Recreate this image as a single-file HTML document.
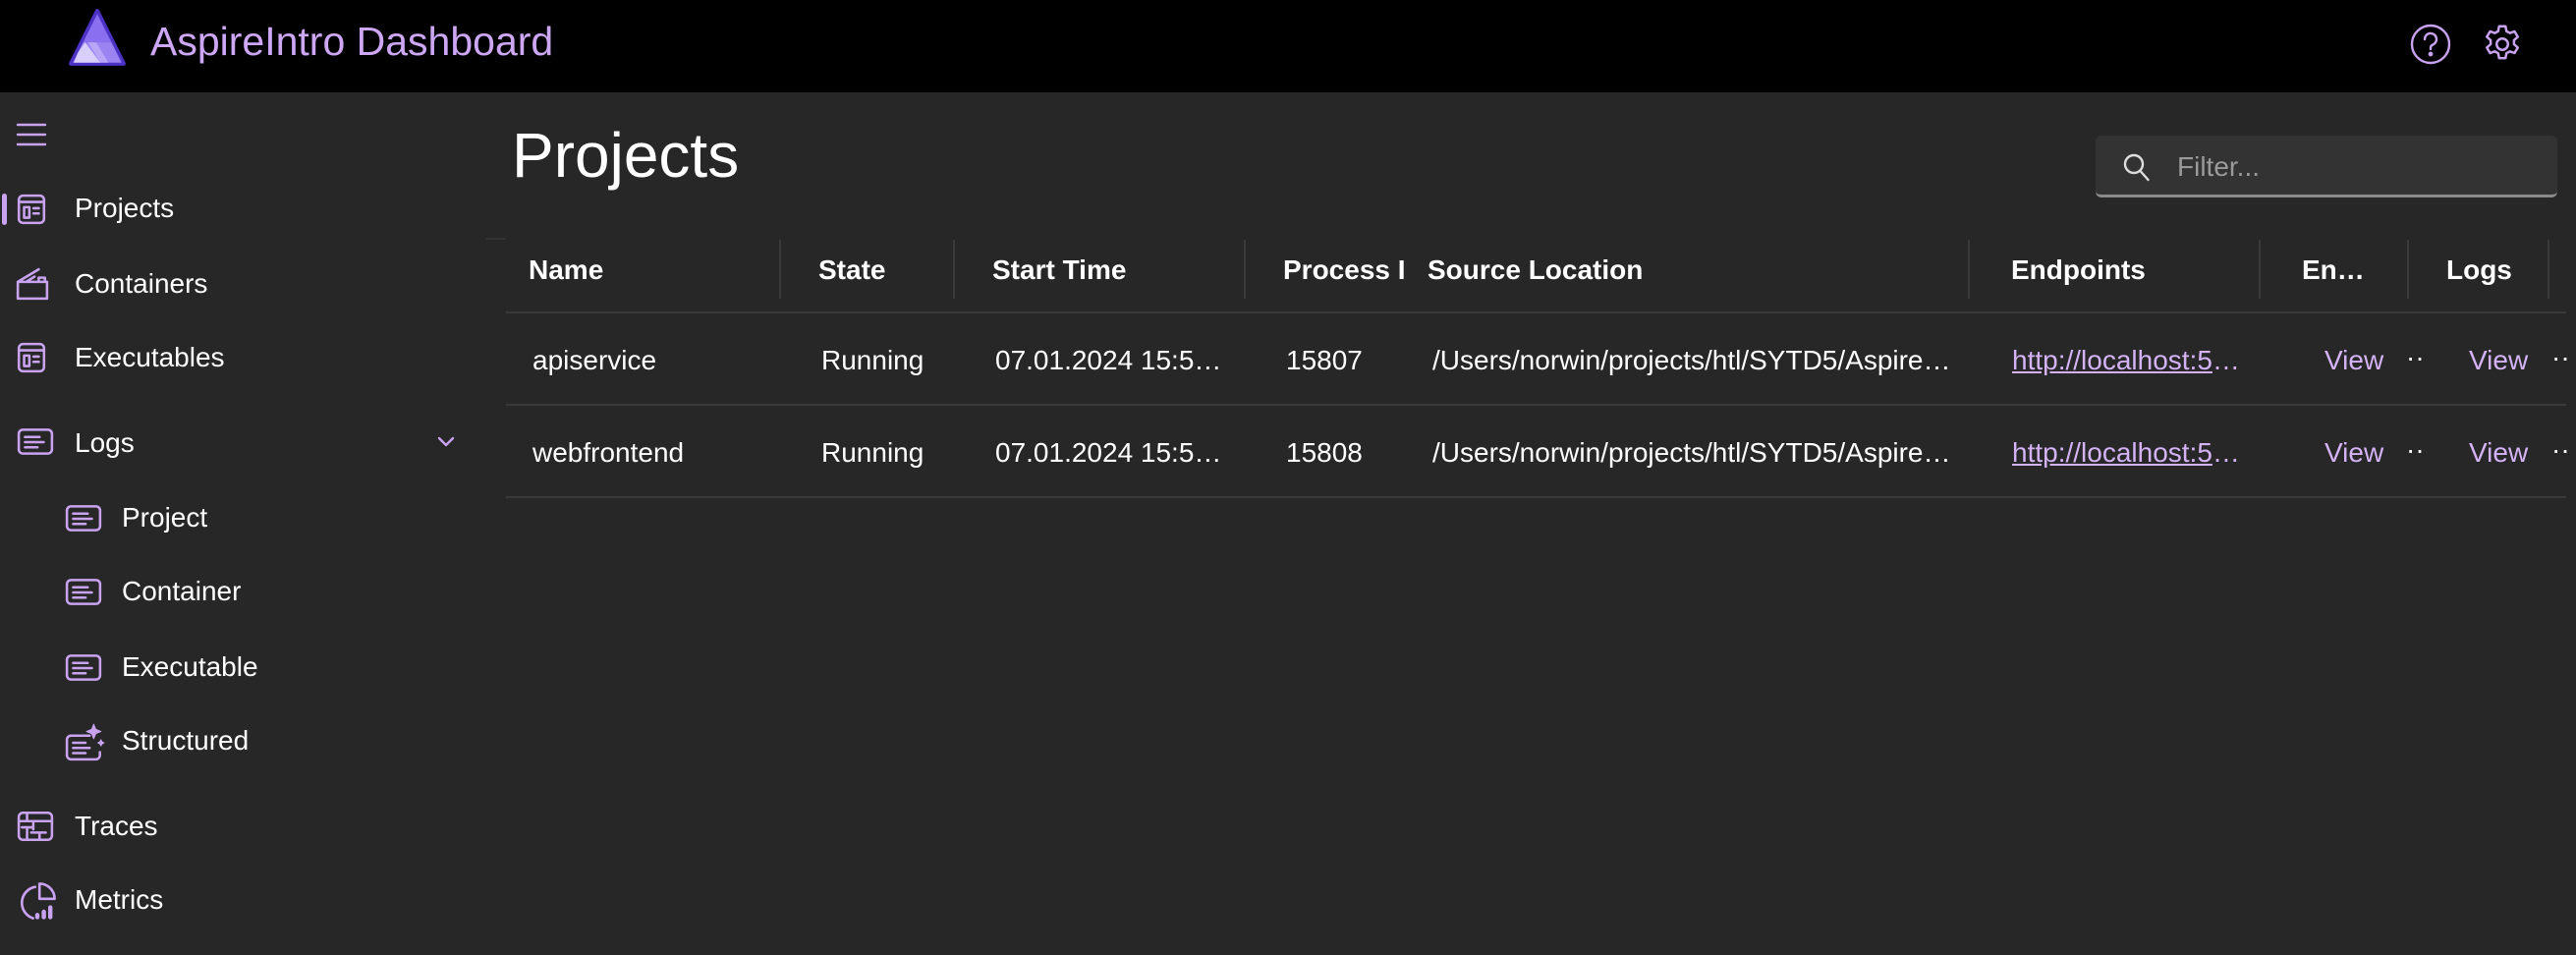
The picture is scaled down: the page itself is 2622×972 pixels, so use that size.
<!DOCTYPE html>
<html><head><meta charset="utf-8"><style>
*{margin:0;padding:0;box-sizing:border-box}
body{width:2622px;height:972px;background:#272727;font-family:"Liberation Sans",Arial,sans-serif;color:#fff;position:relative;overflow:hidden}
.a{position:absolute;white-space:nowrap}
.hdr{position:absolute;left:0;top:0;width:2622px;height:94px;background:#000}
.nav{font-size:28px;line-height:28px}
.th{font-size:28px;font-weight:bold;line-height:28px}
.td{font-size:28px;line-height:28px}
.p{color:#d3b3f5}
.vl{position:absolute;width:2px;background:#3a3a3a;height:60px;top:244px}
.hl{position:absolute;left:515px;width:2097px;height:2px;background:#3a3a3a}
svg.i{position:absolute;fill:none;stroke:#c9a3f0;stroke-width:2.4;stroke-linecap:round;stroke-linejoin:round}
</style></head><body>
<div class="hdr"></div>
<svg class="a" style="left:64px;top:8px" width="70" height="62" viewBox="0 0 58 60">
<path d="M29 3 L55 55 L3 55 Z" fill="#6c4fe0" stroke="#4c33c6" stroke-width="4" stroke-linejoin="round"/>
<path d="M29 6 L43 34 L15 34Z" fill="#8a6ff0"/>
<path d="M15 34 L43 34 L53 54 L5 54Z" fill="#9b84f2"/>
<path d="M10 44 L17 34 L32 54 L6 54Z" fill="#d9cffb"/>
<path d="M20 34 L28 34 L40 54 L32 54Z" fill="#b8a5f7"/>
</svg>
<div class="a p" style="left:153px;top:19px;font-size:41px;line-height:46px;color:#cda6f4">AspireIntro Dashboard</div>
<svg class="i" style="left:2452px;top:23px" width="44" height="44" viewBox="0 0 44 44"><circle cx="22" cy="22" r="19"/><path d="M16 17a6 6 0 1 1 8 5.6c-1.4.6-2 1.6-2 3v1.5"/><circle cx="22" cy="32" r="1.2" fill="#c9a3f0"/></svg>
<svg class="i" style="left:2524px;top:22px" width="46" height="46" viewBox="0 0 24 24"><path stroke-width="1.3" d="M10.3 2.5h3.4l.5 2.6 1.8 1 2.5-.9 1.7 2.9-2 1.8v2.1l2 1.8-1.7 2.9-2.5-.9-1.8 1-.5 2.6h-3.4l-.5-2.6-1.8-1-2.5.9-1.7-2.9 2-1.8v-2.1l-2-1.8 1.7-2.9 2.5.9 1.8-1z"/><circle stroke-width="1.3" cx="12" cy="12" r="3"/></svg>

<!-- sidebar -->
<svg class="i" style="left:16px;top:124px" width="32" height="28" viewBox="0 0 32 28"><path d="M2 3h28M2 13h28M2 23h28"/></svg>
<div class="a" style="left:2px;top:197px;width:5px;height:32px;border-radius:3px;background:#c9a3f0"></div>
<svg class="i" style="left:17px;top:197px" width="30" height="32" viewBox="0 0 28 30"><rect x="2" y="2" width="24" height="26" rx="4"/><path d="M2 8h24M7 13h5v10H7zM16 14h5M16 19h5"/></svg>
<div class="a nav" style="left:76px;top:198px">Projects</div>
<svg class="i" style="left:16px;top:272px" width="34" height="34" viewBox="0 0 32 32"><path d="M2 14h28v16H2zM2 14l20-12M10 14l8-5M22 14v-4h6v4"/></svg>
<div class="a nav" style="left:76px;top:275px">Containers</div>
<svg class="i" style="left:17px;top:348px" width="30" height="32" viewBox="0 0 28 30"><rect x="2" y="2" width="24" height="26" rx="4"/><path d="M2 8h24M7 13h5v10H7zM16 14h5M16 19h5"/></svg>
<div class="a nav" style="left:76px;top:350px">Executables</div>
<svg class="i" style="left:17px;top:435px" width="38" height="30" viewBox="0 0 36 28"><rect x="2" y="2" width="32" height="23" rx="4"/><path d="M8 9h14M8 14h18M8 19h12"/></svg>
<div class="a nav" style="left:76px;top:437px">Logs</div>
<svg class="i" style="left:444px;top:442px" width="20" height="14" viewBox="0 0 20 14"><path d="M3 4l7 7 7-7"/></svg>
<svg class="i" style="left:66px;top:513px" width="38" height="30" viewBox="0 0 36 28"><rect x="2" y="2" width="32" height="23" rx="4"/><path d="M8 9h14M8 14h18M8 19h12"/></svg>
<div class="a nav" style="left:124px;top:513px">Project</div>
<svg class="i" style="left:66px;top:588px" width="38" height="30" viewBox="0 0 36 28"><rect x="2" y="2" width="32" height="23" rx="4"/><path d="M8 9h14M8 14h18M8 19h12"/></svg>
<div class="a nav" style="left:124px;top:588px">Container</div>
<svg class="i" style="left:66px;top:665px" width="38" height="30" viewBox="0 0 36 28"><rect x="2" y="2" width="32" height="23" rx="4"/><path d="M8 9h14M8 14h18M8 19h12"/></svg>
<div class="a nav" style="left:124px;top:665px">Executable</div>
<svg class="i" style="left:66px;top:734px" width="42" height="42" viewBox="0 0 40 40"><path d="M24 14H6a4 4 0 0 0-4 4v15a4 4 0 0 0 4 4h24a4 4 0 0 0 4-4v-3M8 21h12M8 26h16M8 31h12"/><path d="M28 3l2 5 5 2-5 2-2 5-2-5-5-2 5-2z" fill="#c9a3f0" stroke-width="1"/><path d="M35 18l1 2 2 1-2 1-1 2-1-2-2-1 2-1z" fill="#c9a3f0" stroke-width="1"/></svg>
<div class="a nav" style="left:124px;top:740px">Structured</div>
<svg class="i" style="left:17px;top:825px" width="38" height="32" viewBox="0 0 36 30"><rect x="2" y="2" width="32" height="26" rx="4"/><path d="M2 10h32M10 2v8M10 16v12M16 10v8M5 16h10M14 21h14M22 21v7"/></svg>
<div class="a nav" style="left:76px;top:827px">Traces</div>
<svg class="i" style="left:16px;top:895px" width="44" height="44" viewBox="0 0 40 40"><path d="M22 4a14 14 0 0 1 14 14H22zM18 7A15 15 0 0 0 16 36"/><path d="M26 30v5M32 26v9M20 33v2" stroke-width="4"/></svg>
<div class="a nav" style="left:76px;top:902px">Metrics</div>

<!-- main -->
<div class="a" style="left:521px;top:123px;font-size:64px;line-height:70px">Projects</div>
<div class="a" style="left:2133px;top:138px;width:470px;height:63px;background:#333;border-radius:6px;border-bottom:3px solid #8a8a8a"></div>
<svg class="i" style="left:2160px;top:155px;stroke:#ddd" width="30" height="32" viewBox="0 0 30 32"><circle cx="12" cy="12" r="9"/><path d="M18.5 19l8 9"/></svg>
<div class="a" style="left:2216px;top:156px;font-size:28px;line-height:28px;color:#9a9a9a">Filter...</div>

<div class="vl" style="left:793px"></div><div class="vl" style="left:970px"></div><div class="vl" style="left:1266px"></div><div class="vl" style="left:2003px"></div><div class="vl" style="left:2299px"></div><div class="vl" style="left:2450px"></div><div class="vl" style="left:2593px"></div>
<div class="a" style="left:495px;top:242px;width:20px;height:2px;background:#333"></div>
<div class="a th" style="left:538px;top:261px">Name</div>
<div class="a th" style="left:833px;top:261px">State</div>
<div class="a th" style="left:1010px;top:261px">Start Time</div>
<div class="a th" style="left:1306px;top:261px;width:124px;overflow:hidden">Process ID</div>
<div class="a th" style="left:1453px;top:261px">Source Location</div>
<div class="a th" style="left:2047px;top:261px">Endpoints</div>
<div class="a th" style="left:2343px;top:261px">En…</div>
<div class="a th" style="left:2490px;top:261px">Logs</div>
<div class="hl" style="top:317px"></div>
<div class="hl" style="top:411px"></div>
<div class="hl" style="top:505px"></div>

<div class="a td" style="left:542px;top:353px">apiservice</div>
<div class="a td" style="left:836px;top:353px">Running</div>
<div class="a td" style="left:1013px;top:353px">07.01.2024 15:5…</div>
<div class="a td" style="left:1309px;top:353px">15807</div>
<div class="a td" style="left:1458px;top:353px">/Users/norwin/projects/htl/SYTD5/Aspire…</div>
<div class="a td p" style="left:2048px;top:353px"><span style="text-decoration:underline">http://localhost:5</span>…</div>
<div class="a td p" style="left:2366px;top:353px">View</div>
<div class="a td" style="left:2449px;top:350px">··</div>
<div class="a td p" style="left:2513px;top:353px">View</div>
<div class="a td" style="left:2597px;top:350px">··</div>

<div class="a td" style="left:542px;top:447px">webfrontend</div>
<div class="a td" style="left:836px;top:447px">Running</div>
<div class="a td" style="left:1013px;top:447px">07.01.2024 15:5…</div>
<div class="a td" style="left:1309px;top:447px">15808</div>
<div class="a td" style="left:1458px;top:447px">/Users/norwin/projects/htl/SYTD5/Aspire…</div>
<div class="a td p" style="left:2048px;top:447px"><span style="text-decoration:underline">http://localhost:5</span>…</div>
<div class="a td p" style="left:2366px;top:447px">View</div>
<div class="a td" style="left:2449px;top:444px">··</div>
<div class="a td p" style="left:2513px;top:447px">View</div>
<div class="a td" style="left:2597px;top:444px">··</div>
</body></html>
